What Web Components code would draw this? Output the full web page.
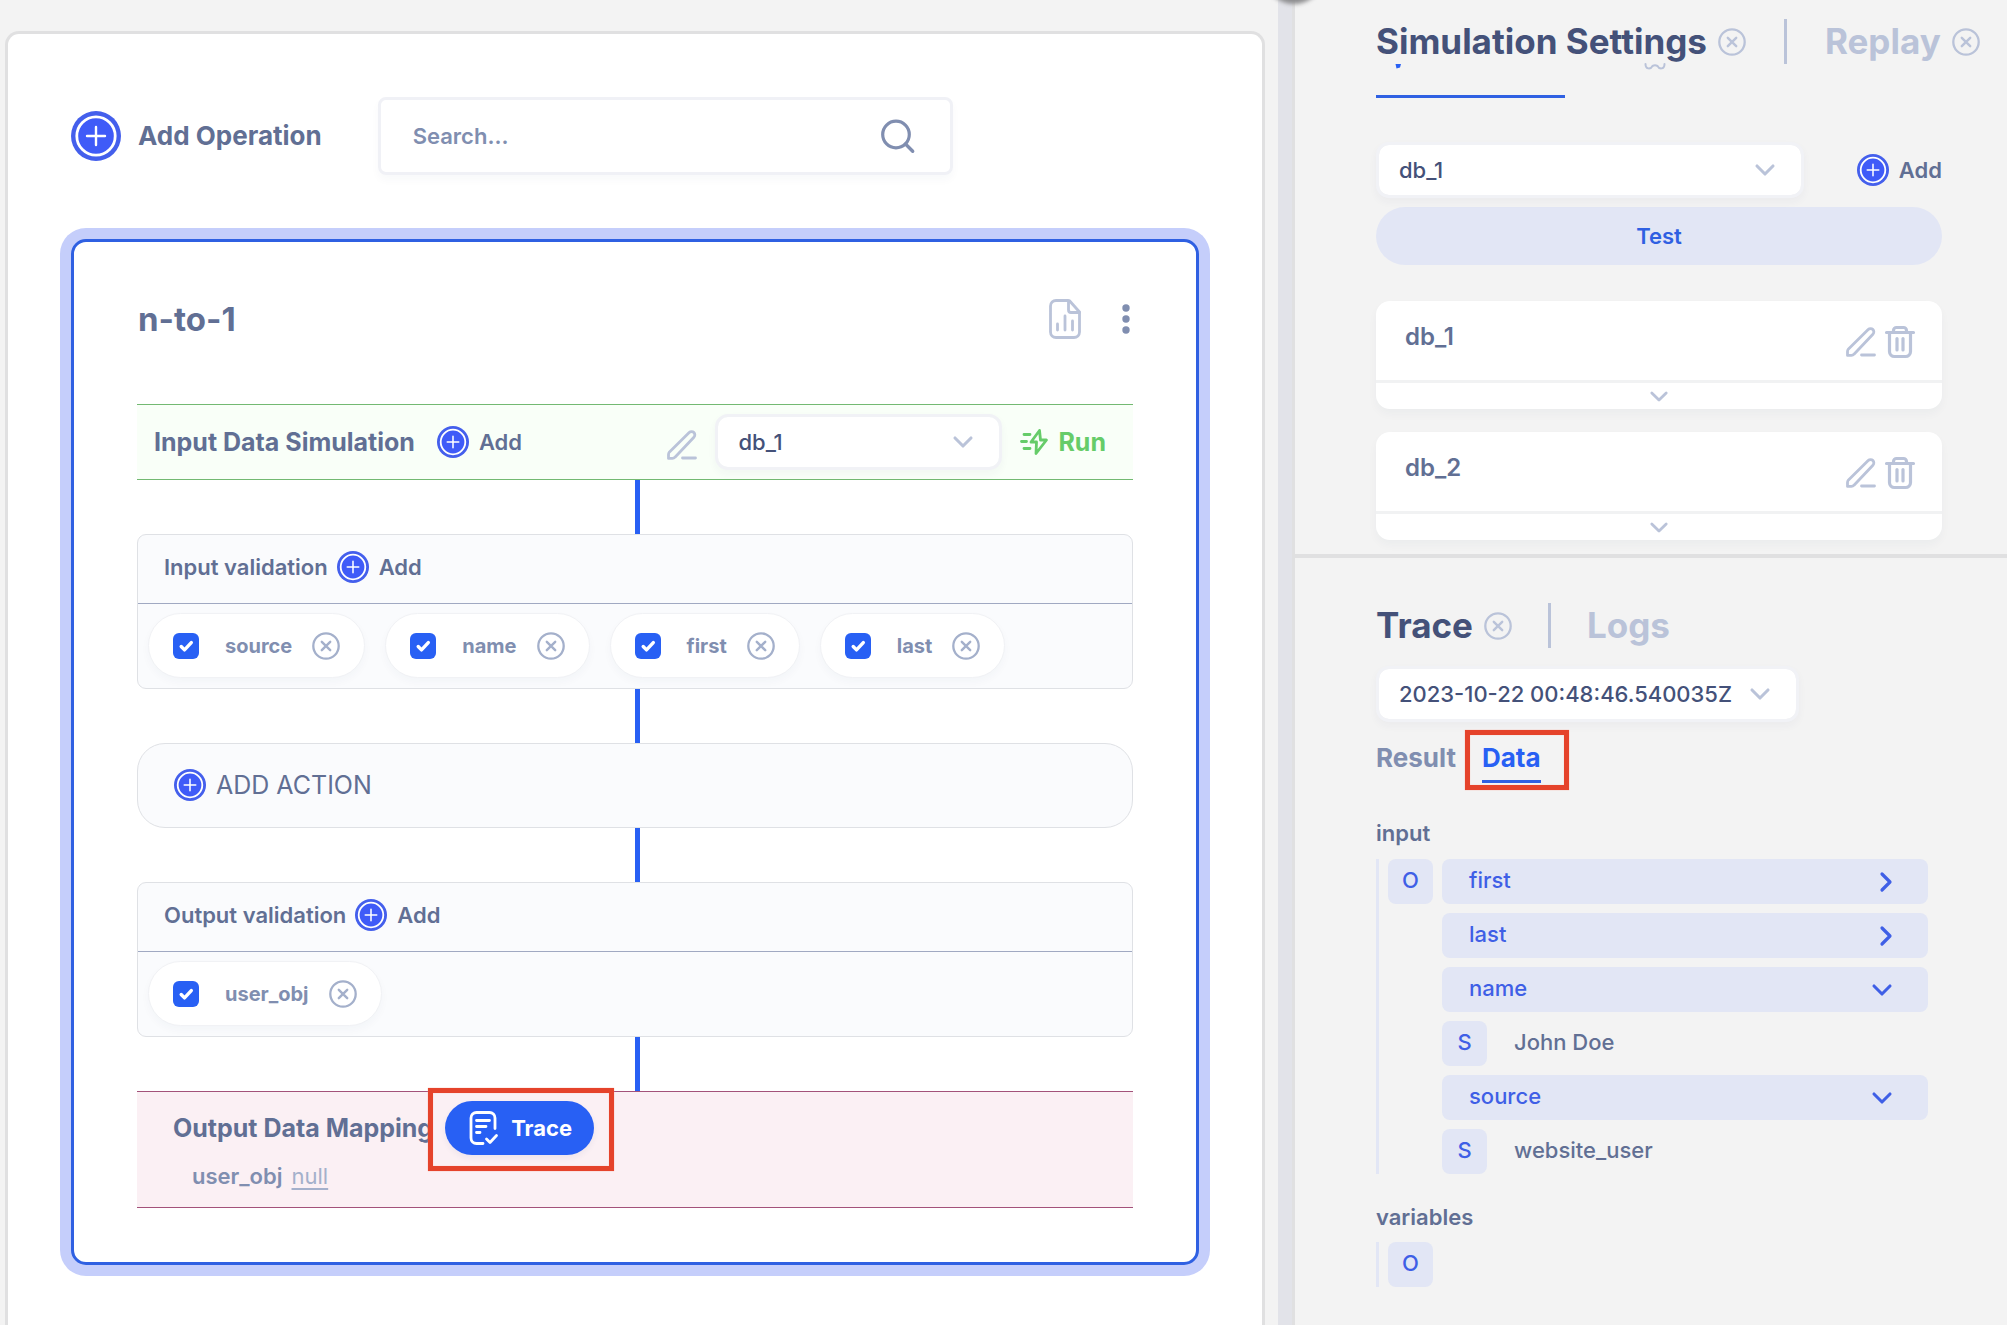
<!DOCTYPE html>
<html lang="en">
<head>
<meta charset="utf-8">
<title>n-to-1</title>
<style>
  html, body { margin: 0; height: 100%; }
  body {
    font-family: Inter, "Liberation Sans", sans-serif;
    font-size: 22px;
    line-height: 30px;
    font-weight: 600;
    color: #616f94;
    background: #f3f3f3;
    overflow: hidden;
    --ink: #445179;
    --text: #616f94;
    --muted: #808eb0;
    --faint: #bac3d9;
    --blue: #2860f4;
    --tint: #e2e6f5;
    --line: #e0e0e1;
  }
</style>
</head>
<body>
<sim-app></sim-app>
<script>
const define = (name, html) => {
  const template = document.createElement('template');
  template.innerHTML = `<style>
    *, :host { box-sizing: border-box; }
    button { font: inherit; color: inherit; background: none; border: 0; padding: 0; margin: 0; cursor: pointer; }
    h1, h2, h3, p { margin: 0; font: inherit; }
  </style>` + html;
  customElements.define(name, class extends HTMLElement {
    constructor() {
      super();
      this.attachShadow({ mode: 'open' }).append(template.content.cloneNode(true));
    }
  });
};

const icons = {
  plus: ['0 0 50 50', `<circle cx="25" cy="25" r="25" fill="#445fec" stroke="none"/><circle cx="25" cy="25" r="19.2" fill="#3f5bf8" stroke="#fff" stroke-width="2.8"/><path d="M25 16v18M16 25h18" stroke="#fff" stroke-width="2.4" stroke-linecap="round"/>`],
  search: ['0 0 34 34', `<circle cx="15" cy="15.500" r="13.300" stroke-width="3.200"/><path d="M24.500 25l7.200 7.200" stroke-width="3.400"/>`],
  report: ['0 0 32 40', `<path d="M19 1.500H7a5.500 5.500 0 0 0-5.500 5.500v26A5.500 5.500 0 0 0 7 38.500h18a5.500 5.500 0 0 0 5.500-5.500V13L20.500 1.700"/><path d="M19.500 2v9a2.500 2.500 0 0 0 2.500 2.500h8.500M8.500 25v6M16 17v14M23.500 22v9"/>`],
  dots: ['0 0 8 30', `<g fill="currentColor" stroke="none"><circle cx="4" cy="4" r="3.700"/><circle cx="4" cy="15" r="3.700"/><circle cx="4" cy="26" r="3.700"/></g>`],
  pencil: ['0 0 30 30', `<path d="M1.500 24.500c0-1 .3-1.800 1-2.600L22.200 2.500c1.300-1.300 3.500-1.300 4.700 0s1.300 3.400 0 4.700L8 27.200c-.7.800-1.600 1.200-2.600 1.200H1.500zM15.500 28h13"/>`],
  trash: ['0 0 30 32', `<path d="M1.500 6.500h27M8.500 6.500V4.500a3 3 0 0 1 3-3h7a3 3 0 0 1 3 3v2M4.500 6.500v19a5 5 0 0 0 5 5h11a5 5 0 0 0 5-5v-19M12 12.500v11.500M18 12.500v11.500" stroke-width="3.200"/>`],
  down: ['0 0 20 12', `<path d="M2 2l8 8 8-8" stroke-width="3.100"/>`],
  right: ['0 0 12 20', `<path d="M2 2l8 8-8 8" stroke-width="3.200"/>`],
  close: ['0 0 28 28', `<circle cx="14" cy="14" r="12.700" stroke-width="2.300"/><path d="M9.800 9.800l8.400 8.400M18.200 9.800l-8.400 8.400" stroke-width="2.400"/>`],
  bolt: ['0 0 28 26', `<path d="M19.500 1.500l-8.500 11.500h5.500l-.5 11.500L26.500 11h-6z"/><path d="M4 5.500h6M1.500 12.500h5M4 19.500h6"/>`],
  trace: ['0 0 28 34', `<path d="M26 17.500V7a5.500 5.500 0 0 0-5.500-5.500h-13A5.500 5.500 0 0 0 2 7v20a5.500 5.500 0 0 0 5.500 5.500H14"/><path d="M7.500 9.500h13M7.500 15.500h9.500M7.500 21.500h3.500M17.500 28l3.500 3.500 6.500-7"/>`],
  check: ['0 0 26 26', `<path d="M8.200 13.500l3.300 3.400 6.800-7.300" stroke-width="3.400"/>`],
  tailA: ['0 0 40 6', `<path d="M19.500 0h5.500l-1 3.500-3.500 1z" fill="currentColor" stroke="none"/>`],
  tailB: ['0 0 24 6', `<path d="M2.500 0c0 6 5.500 5 7 2 1.500-.8 3.500-.8 5 0 1.500 3 7 4 7-2" stroke-width="2"/>`]
};
customElements.define('ui-icon', class extends HTMLElement {
  connectedCallback() {
    if (this.shadowRoot) return;
    const [box, art] = icons[this.getAttribute('name')];
    const [, , w, h] = box.split(' ');
    const width = this.getAttribute('width') || w;
    this.attachShadow({ mode: 'open' }).innerHTML = `<style>
      :host { display: inline-flex; flex: none; }
      svg { display: block; overflow: visible; }
    </style><svg width="${width}" height="${Math.round(width * h / w)}" viewBox="${box}" fill="none"
      stroke="currentColor" stroke-width="2.800" stroke-linecap="round" stroke-linejoin="round" aria-hidden="true">${art}</svg>`;
  }
});

/* Blue round plus with its caption */
define('add-button', `<style>
  :host { display: inline-flex; }
  button { display: flex; align-items: center; gap: 10px; }
</style><button type="button"><ui-icon name="plus" width="32"></ui-icon><slot>Add</slot></button>`);

/* Drop-down whose options come from the "options" attribute */
customElements.define('ui-select', class extends HTMLElement {
  connectedCallback() {
    if (this.shadowRoot) return;
    const items = this.getAttribute('options').split(',');
    this.attachShadow({ mode: 'open' }).innerHTML = `<style>
      :host { display: grid; align-items: center; color: var(--ink); font-weight: 500; }
      select, ui-icon { grid-area: 1 / 1; }
      select {
        appearance: none; box-sizing: border-box; width: 100%; height: 56px; margin: 0;
        padding: 0 58px 0 20px; font: inherit; color: inherit; background: #fff;
        border: 3px solid #f1f2f6; border-radius: 13px; background-clip: padding-box;
        box-shadow: 0 4px 8px #2a36600a; line-height: 30px;
      }
      ui-icon { justify-self: end; margin-right: 29px; color: var(--faint); pointer-events: none; }
    </style><select aria-label="${this.getAttribute('label')}">${items.map(i => `<option>${i}</option>`).join('')}</select>
    <ui-icon name="down"></ui-icon>`;
  }
});

/* Highlight frame round its content */
define('red-frame', `<style>
  :host { display: inline-flex; position: relative; }
  :host::after {
    content: ""; position: absolute; inset: var(--frame-inset); pointer-events: none;
    border: 5px solid #e5432b; box-shadow: 0 0 1px #f7a08c, inset 0 0 1px #f7a08c;
  }
</style><slot></slot>`);

define('flow-link', `<style>
  :host { display: block; width: 5px; height: 54px; margin-left: 50%; background: var(--blue); }
</style>`);

define('check-chip', `<style>
  :host {
    display: flex; align-items: center; height: 65px; padding: 0 24px; border: 1px solid #f1f2f5;
    border-radius: 33px; background: #fff; box-shadow: 0 4px 8px #2a366008;
    font-size: 20px; font-weight: 700; color: var(--muted);
  }
  label { display: flex; align-items: center; gap: 26px; }
  .box { display: grid; width: 26px; height: 26px; color: #fff; }
  .box > * { grid-area: 1 / 1; }
  input { appearance: none; margin: 0; width: 26px; height: 26px; border-radius: 6px; background: var(--blue); }
  .box ui-icon { pointer-events: none; }
  button { display: flex; margin-left: 20px; color: #a4b0cb; }
</style>
<label><span class="box"><input type="checkbox" checked><ui-icon name="check"></ui-icon></span><slot></slot></label>
<button type="button" aria-label="Remove"><ui-icon name="close"></ui-icon></button>`);

define('validation-box', `<style>
  :host { display: block; border: 1px solid #dfe1e5; border-radius: 9px; background: #fafbfd; }
  header { display: flex; align-items: center; gap: 9px; height: 69px; padding: 0 26px 4px; border-bottom: 1px solid #a0a9c2; }
  .chips { display: flex; flex-wrap: wrap; gap: 20px; padding: 9px 10px 10px; }
</style>
<header><h3><slot name="title"></slot></h3><add-button></add-button></header>
<div class="chips"><slot></slot></div>`);

define('operation-card', `<style>
  :host {
    display: block; padding: 0 63px 54px; border: 3px solid #2f60e2; border-radius: 15px;
    box-shadow: 0 0 0 11px #c5cefb; background: #fff;
  }
  .head { display: flex; align-items: center; height: 44px; margin: 55px 0 63px; }
  .head h2 { flex: 1; padding-left: 1px; font-size: 33px; line-height: 44px; font-weight: 700; }
  .head button { display: flex; color: var(--muted); }
  .head .report { margin-right: 41px; color: var(--faint); }
  .head .more { margin-right: 3px; }
  .input {
    display: flex; align-items: center; height: 76px; padding: 0 27px 0 17px;
    background: #f9fff8; border: solid #73b972; border-width: 1px 0;
  }
  .input h3, .output h3, .run { font-size: 25px; font-weight: 700; }
  .input add-button { margin: 0 auto 0 22px; }
  .input ui-select { width: 287px; }
  .pencil { display: flex; margin-right: 18px; padding-top: 5px; color: var(--faint); }
  .input .run { display: flex; align-items: center; gap: 10px; margin-left: 18px; color: #66cc69; }
  .action {
    display: flex; align-items: center; height: 85px; padding: 0 36px 2px;
    border: 1px solid #dfe1e5; border-radius: 28px; background: #fafbfd;
  }
  .action add-button { font-size: 25px; font-weight: 400; }
  .output {
    display: flex; flex-direction: column; gap: 6px; height: 117px; padding: 9px 36px 0;
    background: #fbf0f4; border: solid #a3527a; border-width: 1px 0;
  }
  .output .row { display: flex; align-items: center; gap: 12px; }
  .trace {
    display: flex; align-items: center; gap: 14px; height: 54px; padding: 0 22px 0 24px;
    border-radius: 27px; background: var(--blue); color: #fff; font-weight: 700;
    box-shadow: 0 3px 6px #2a36600f;
  }
  .output red-frame { --frame-inset: -13px -20px -16px -17px; }
  .output .map { gap: 9px; padding-left: 19px; color: var(--muted); }
  .map a { color: #a4b0cb; font-weight: 400; text-decoration: underline; text-underline-offset: 4px; }
</style>
<div class="head">
  <h2>n-to-1</h2>
  <button class="report" type="button" aria-label="Report"><ui-icon name="report"></ui-icon></button>
  <button class="more" type="button" aria-label="More"><ui-icon name="dots"></ui-icon></button>
</div>
<div class="input">
  <h3>Input Data Simulation</h3>
  <add-button></add-button>
  <button class="pencil" type="button" aria-label="Edit"><ui-icon name="pencil"></ui-icon></button>
  <ui-select label="Database" options="db_1,db_2"></ui-select>
  <button class="run" type="button"><ui-icon name="bolt"></ui-icon>Run</button>
</div>
<flow-link></flow-link>
<validation-box>
  <span slot="title">Input validation</span>
  <check-chip>source</check-chip><check-chip>name</check-chip><check-chip>first</check-chip><check-chip>last</check-chip>
</validation-box>
<flow-link></flow-link>
<div class="action"><add-button>ADD ACTION</add-button></div>
<flow-link></flow-link>
<validation-box>
  <span slot="title">Output validation</span>
  <check-chip>user_obj</check-chip>
</validation-box>
<flow-link></flow-link>
<div class="output">
  <div class="row">
    <h3>Output Data Mapping</h3>
    <red-frame><button class="trace" type="button"><ui-icon name="trace"></ui-icon>Trace</button></red-frame>
  </div>
  <div class="row map"><span>user_obj</span><a href="#null">null</a></div>
</div>`);

define('work-space', `<style>
  :host { display: block; padding: 31px 13px 0 5px; min-width: 0; }
  main {
    height: 100%; padding: 63px 63px 0; border: solid var(--line); border-width: 3px 3px 0;
    border-radius: 14px 14px 0 0; background: #fff;
  }
  .bar { display: flex; align-items: center; gap: 56px; margin-bottom: 64px; }
  .add { display: flex; align-items: center; gap: 17px; font-size: 26px; font-weight: 700; white-space: nowrap; }
  .search {
    display: flex; align-items: center; flex: 0 1 575px; height: 78px; padding: 0 35px 0 32px;
    border: 3px solid #f0f1f6; border-radius: 8px; box-shadow: 0 5px 8px #2a366008; color: var(--muted);
  }
  input { flex: 1; min-width: 0; border: 0; outline: 0; padding: 0; font: inherit; background: none; color: inherit; }
  input::placeholder { color: var(--muted); opacity: 1; }
  .search button { display: flex; }
</style>
<main>
  <div class="bar">
    <button class="add" type="button"><ui-icon name="plus"></ui-icon>Add Operation</button>
    <div class="search">
      <input type="text" placeholder="Search..." aria-label="Search">
      <button type="button" aria-label="Search"><ui-icon name="search"></ui-icon></button>
    </div>
  </div>
  <operation-card></operation-card>
</main>`);

define('split-bar', `<style>
  :host { display: block; position: relative; background: #e2e3e9; border-right: 3px solid var(--line); }
  i {
    position: absolute; left: 50%; top: -56px; width: 60px; height: 60px; margin-left: -21px;
    border-radius: 50%; background: #8d8d8f; filter: blur(2px);
  }
</style><i></i>`);

/* Panel heading: an active title, a rule, and a second, inactive one */
define('panel-head', `<style>
  :host { display: flex; align-items: center; gap: 36px; height: 45px; font-size: 35px; line-height: 45px; font-weight: 700; color: var(--ink); white-space: nowrap; }
  ::slotted(*) { display: flex; align-items: center; gap: 11px; }
  .rule { width: 3px; height: 45px; background: var(--faint); }
</style><slot name="active"></slot><span class="rule"></span><slot name="other"></slot>`);

define('db-card', `<style>
  :host { display: block; border-radius: 14px; background: #fff; box-shadow: 0 5px 10px #2a366009; }
  .top { display: flex; align-items: center; gap: 9px; height: 82px; padding: 0 27px 0 29px; border-bottom: 3px solid #f1f2f3; color: var(--faint); }
  h3 { flex: 1; padding-bottom: 7px; font-size: 24px; color: var(--text); }
  .top button { display: flex; padding-top: 3px; }
  .fold { display: flex; align-items: center; justify-content: center; width: 100%; height: 26px; color: var(--faint); }
</style>
<div class="top">
  <h3><slot></slot></h3>
  <button type="button" aria-label="Edit"><ui-icon name="pencil"></ui-icon></button>
  <button type="button" aria-label="Delete"><ui-icon name="trash"></ui-icon></button>
</div>
<button class="fold" type="button" aria-label="Expand"><ui-icon name="down" width="18"></ui-icon></button>`);

define('settings-panel', `<style>
  :host { display: block; padding: 19px 0 14px 81px; border-bottom: 4px solid var(--line); overflow: hidden; }
  .tabs { display: flex; height: 34px; }
  .tabs button { display: flex; align-items: flex-start; width: 189px; color: var(--faint); }
  .tabs button + button { padding-left: 78px; }
  .tabs .on { color: var(--blue); border-bottom: 3px solid #2f60e2; }
  .body { padding-right: 65px; }
  .pick { display: flex; align-items: center; justify-content: space-between; margin: 44px 0 9px; }
  .pick ui-select { flex: 0 1 428px; }
  .test { display: block; width: 100%; height: 58px; border-radius: 29px; background: var(--tint); color: #2f60e2; margin-bottom: 36px; }
  db-card + db-card { margin-top: 23px; }
  panel-head { gap: 38px; }
  .off { color: var(--faint); }
  .x { display: flex; color: var(--faint); }
</style>
<panel-head>
  <h1 slot="active">Simulation Settings<button class="x" type="button" aria-label="Close"><ui-icon name="close"></ui-icon></button></h1>
  <h2 slot="other" class="off">Replay<button class="x" type="button" aria-label="Close"><ui-icon name="close"></ui-icon></button></h2>
</panel-head>
<div class="tabs">
  <button class="on" type="button" aria-label="Data"><ui-icon name="tailA"></ui-icon></button>
  <button type="button" aria-label="Options"><ui-icon name="tailB"></ui-icon></button>
</div>
<div class="body">
  <div class="pick"><ui-select label="Database" options="db_1,db_2"></ui-select><add-button></add-button></div>
  <button class="test" type="button">Test</button>
  <db-card>db_1</db-card>
  <db-card>db_2</db-card>
</div>`);

define('type-tag', `<style>
  :host { display: flex; align-items: center; justify-content: center; flex: none; width: 45px; height: 45px;
    padding-bottom: 3px; border-radius: 8px; background: var(--tint); color: #3f5fe6; }
</style><slot></slot>`);

customElements.define('tree-key', class extends HTMLElement {
  connectedCallback() {
    if (this.shadowRoot) return;
    this.attachShadow({ mode: 'open' }).innerHTML = `<style>
      button { display: flex; align-items: center; justify-content: space-between; box-sizing: border-box;
        width: 100%; height: 45px; margin: 0; padding: 0 36px 0 27px; border: 0; border-radius: 8px;
        background: var(--tint); color: #3f5fe6; font: inherit; }
      slot { display: block; padding-bottom: 3px; }
      :host { display: block; }
    </style><button type="button"><slot></slot><ui-icon name="${this.hasAttribute('open') ? 'down' : 'right'}"></ui-icon></button>`;
  }
});

define('tree-view', `<style>
  :host { display: flex; align-items: flex-start; gap: 9px; padding-left: 9px; border-left: 3px solid var(--tint); font-weight: 500; }
  .rows { display: flex; flex: 1; flex-direction: column; gap: 9px; }
</style><type-tag>O</type-tag><div class="rows"><slot></slot></div>`);

define('tree-value', `<style>
  :host { display: flex; align-items: center; gap: 27px; }
  .text { padding-bottom: 3px; }
</style><type-tag>S</type-tag><span class="text"><slot></slot></span>`);

define('trace-panel', `<style>
  :host { display: block; padding: 45px 79px 0 81px; }
  ui-select { width: 423px; margin: 18px 0 21px; }
  .x { display: flex; color: var(--faint); }
  .off { color: var(--faint); }
  .tabs { display: flex; gap: 26px; font-size: 26px; font-weight: 700; }
  .tabs button { height: 40px; padding-bottom: 7px; border-bottom: 3px solid transparent; color: var(--muted); }
  .tabs .on { color: var(--blue); border-color: #2f60e2; }
  .tabs red-frame { --frame-inset: -13px -28px -7px -17px; }
  h3 { margin: 35px 0 11px; }
  tree-view + h3 { margin: 28px 0 10px; }
</style>
<panel-head>
  <h1 slot="active">Trace<button class="x" type="button" aria-label="Close"><ui-icon name="close"></ui-icon></button></h1>
  <h2 slot="other" class="off">Logs</h2>
</panel-head>
<ui-select label="Run" options="2023-10-22 00:48:46.540035Z"></ui-select>
<div class="tabs">
  <button type="button">Result</button>
  <red-frame><button class="on" type="button">Data</button></red-frame>
</div>
<h3>input</h3>
<tree-view>
  <tree-key>first</tree-key>
  <tree-key>last</tree-key>
  <tree-key open>name</tree-key>
  <tree-value>John Doe</tree-value>
  <tree-key open>source</tree-key>
  <tree-value>website_user</tree-value>
</tree-view>
<h3>variables</h3>
<tree-view></tree-view>`);

define('sim-app', `<style>
  :host { display: grid; grid-template-columns: minmax(0, 1278fr) 17px minmax(0, 712fr); min-height: 100vh; overflow: hidden; }
  aside { min-width: 0; }
</style>
<work-space></work-space>
<split-bar></split-bar>
<aside><settings-panel></settings-panel><trace-panel></trace-panel></aside>`);
</script>
</body>
</html>
